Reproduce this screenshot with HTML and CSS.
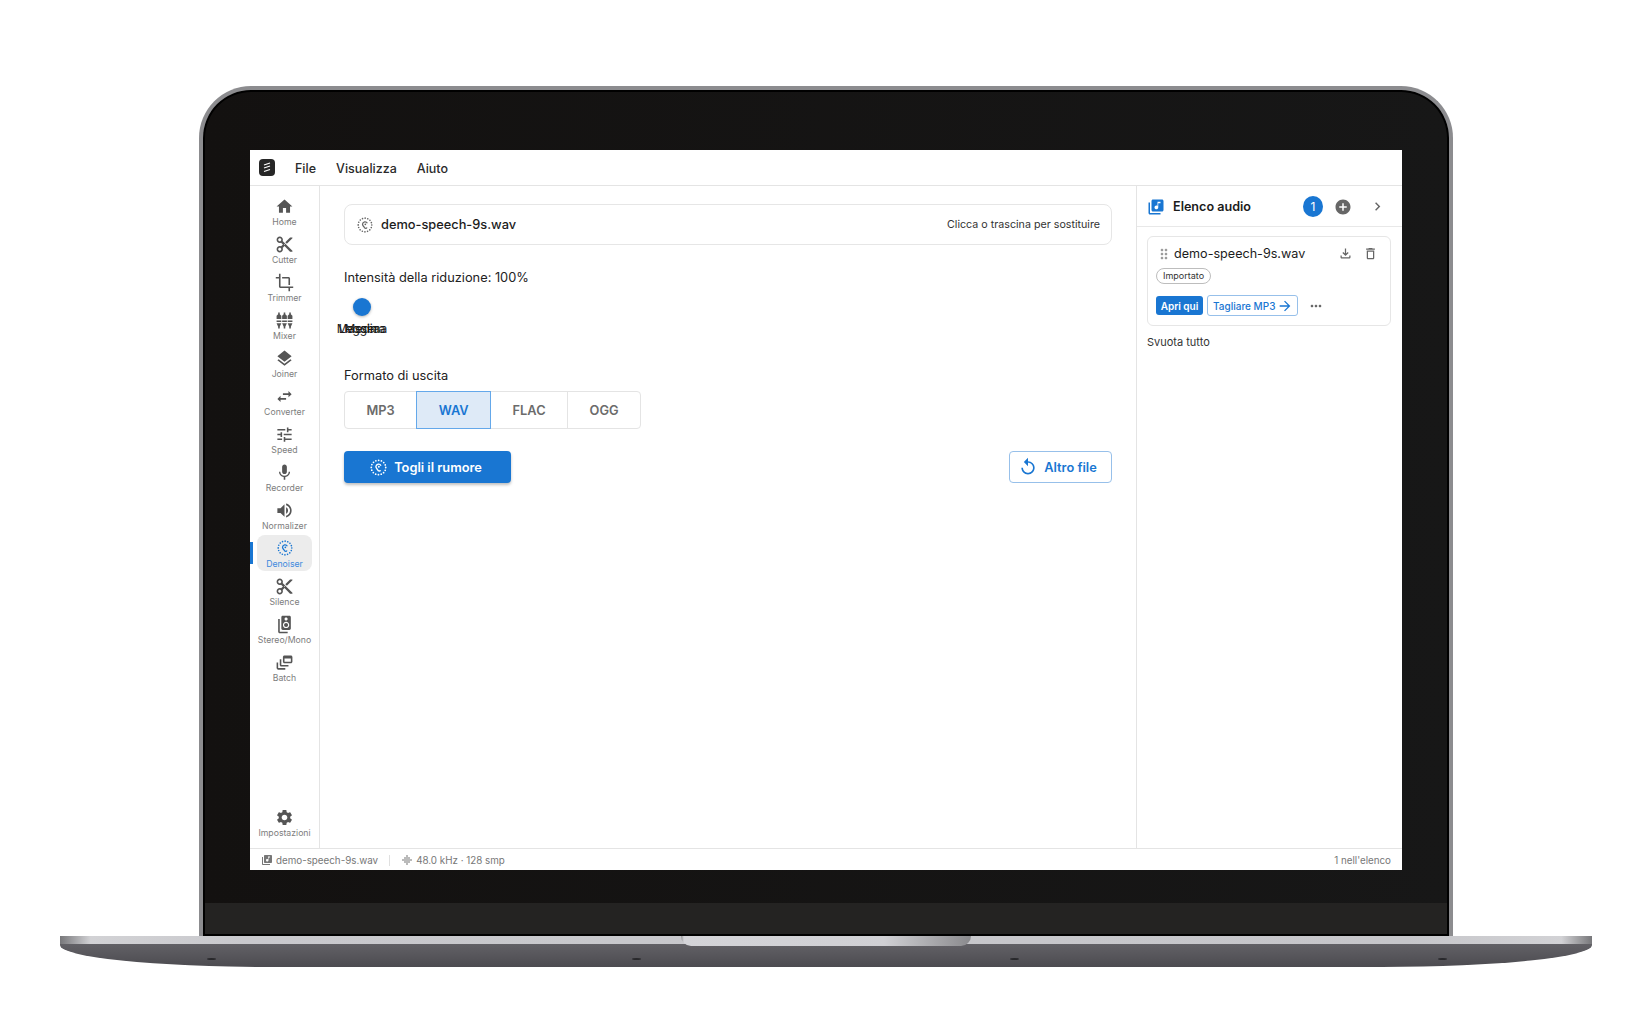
FILE: index.html
```html
<!DOCTYPE html>
<html lang="it">
<head>
    <meta charset="UTF-8" />
    <title>Denoiser</title>
    <link rel="stylesheet" href="styles.css">
</head>
<body>

    <svg class="sprite" aria-hidden="true">
        <symbol id="i-home" viewBox="0 0 24 24"><path d="M10 20v-6h4v6h5v-8h3L12 3 2 12h3v8z"/></symbol>
        <symbol id="i-cut" viewBox="0 0 24 24"><path d="M9.64 7.64c.23-.5.36-1.05.36-1.64 0-2.21-1.79-4-4-4S2 3.79 2 6s1.79 4 4 4c.59 0 1.14-.13 1.64-.36L10 12l-2.36 2.36C7.14 14.13 6.59 14 6 14c-2.21 0-4 1.79-4 4s1.79 4 4 4 4-1.79 4-4c0-.59-.13-1.14-.36-1.64L12 14l7 7h3v-1L9.64 7.64zM6 8c-1.1 0-2-.89-2-2s.9-2 2-2 2 .89 2 2-.9 2-2 2zm0 12c-1.1 0-2-.89-2-2s.9-2 2-2 2 .89 2 2-.9 2-2 2zm6-7.5c-.28 0-.5-.22-.5-.5s.22-.5.5-.5.5.22.5.5-.22.5-.5.5zM19 3l-6 6 2 2 7-7V3z"/></symbol>
        <symbol id="i-crop" viewBox="0 0 24 24"><path d="M17 15h2V7c0-1.1-.9-2-2-2H9v2h8v8zM7 17V1H5v4H1v2h4v10c0 1.1.9 2 2 2h10v4h2v-4h4v-2H7z"/></symbol>
        <symbol id="i-mixer" viewBox="0 0 24 24"><path d="M4 2h2v2l2 2v4H2V6l2-2zM11 2h2v2l2 2v4H9V6l2-2zM18 2h2v2l2 2v4h-6V6l2-2zM2 12h6v2H2zM9 12h6v2H9zM16 12h6v2h-6zM2 15.500h6L6 20v2H4v-2zM9 15.500h6L13 20v2h-2v-2zM16 15.500h6L20 20v2h-2v-2z"/></symbol>
        <symbol id="i-layers" viewBox="0 0 24 24"><path d="M11.99 18.54l-7.37-5.73L3 14.07l9 7 9-7-1.63-1.27-7.38 5.74zM12 16l7.36-5.73L21 9l-9-7-9 7 1.63 1.27L12 16z"/></symbol>
        <symbol id="i-swap" viewBox="0 0 24 24"><path d="M6.99 11L3 15l3.99 4v-3H14v-2H6.99v-3zM21 9l-3.99-4v3H10v2h7.01v3L21 9z"/></symbol>
        <symbol id="i-tune" viewBox="0 0 24 24"><path d="M3 17v2h6v-2H3zM3 5v2h10V5H3zm10 16v-2h8v-2h-8v-2h-2v6h2zM7 9v2H3v2h4v2h2V9H7zm14 4v-2H11v2h10zm-6-4h2V7h4V5h-4V3h-2v6z"/></symbol>
        <symbol id="i-mic" viewBox="0 0 24 24"><path d="M12 14c1.66 0 2.99-1.34 2.99-3L15 5c0-1.66-1.34-3-3-3S9 3.340 9 5v6c0 1.66 1.34 3 3 3zm5.300-3c0 3-2.540 5.100-5.300 5.100S6.700 14 6.700 11H5c0 3.410 2.720 6.230 6 6.720V21h2v-3.280c3.280-.48 6-3.300 6-6.720h-1.700z"/></symbol>
        <symbol id="i-volume" viewBox="0 0 24 24"><path d="M3 9v6h4l5 5V4L7 9H3zm13.500 3c0-1.770-1.020-3.290-2.500-4.030v8.050c1.480-.73 2.500-2.250 2.500-4.020zM14 3.230v2.060c2.890.86 5 3.540 5 6.710s-2.110 5.850-5 6.710v2.060c4.010-.91 7-4.490 7-8.770s-2.990-7.860-7-8.770z"/></symbol>
        <symbol id="i-denoise" viewBox="0 0 24 24">
            <circle cx="12" cy="12" r="10.200" fill="none" stroke="currentColor" stroke-width="2.500" stroke-linecap="round" stroke-dasharray="0 4"/>
            <path d="M15.500 9.500a3.800 3.800 0 0 0-7.200 1.200c0 2.500 1.800 3 2.400 4.500.4 1.200 1 1.800 2.300 1.800.9 0 1.600-.5 1.900-1.200" fill="none" stroke="currentColor" stroke-width="1.900"/>
            <circle cx="12.500" cy="11" r="1.300"/>
        </symbol>
        <symbol id="i-speaker" viewBox="0 0 24 24"><path d="M18.200 1H9.800C8.810 1 8 1.810 8 2.800v14.400c0 .99.810 1.790 1.800 1.790l8.400.01c.99 0 1.800-.81 1.800-1.800V2.800c0-.99-.81-1.800-1.800-1.800zM14 3c1.100 0 2 .89 2 2s-.9 2-2 2-2-.89-2-2 .9-2 2-2zm0 13.500c-2.210 0-4-1.790-4-4s1.790-4 4-4 4 1.790 4 4-1.790 4-4 4zm0-6.500c-1.380 0-2.500 1.120-2.500 2.500S12.620 15 14 15s2.500-1.120 2.500-2.500S15.380 10 14 10zM6 5H4v16c0 1.100.89 2 2 2h10v-2H6V5z"/></symbol>
        <symbol id="i-batch" viewBox="0 0 24 24"><path d="M8 8H6v7c0 1.100.9 2 2 2h9v-2H8V8zM20 3h-8c-1.100 0-2 .9-2 2v6c0 1.100.9 2 2 2h8c1.100 0 2-.9 2-2V5c0-1.100-.9-2-2-2zm0 8h-8V7h8v4zM4 12H2v7c0 1.100.9 2 2 2h9v-2H4v-7z"/></symbol>
        <symbol id="i-gear" viewBox="0 0 24 24"><path d="M19.140 12.940c.04-.3.060-.61.060-.94 0-.32-.02-.64-.07-.94l2.030-1.580c.18-.14.23-.41.120-.61l-1.920-3.320c-.12-.22-.37-.29-.59-.22l-2.390.96c-.5-.38-1.030-.7-1.620-.94l-.36-2.540c-.04-.24-.24-.41-.48-.41h-3.840c-.24 0-.43.17-.47.41l-.36 2.540c-.59.24-1.130.57-1.620.94l-2.390-.96c-.22-.08-.47 0-.59.22L2.740 8.870c-.12.21-.08.47.12.61l2.030 1.580c-.05.3-.09.63-.09.94s.02.64.07.94l-2.030 1.580c-.18.14-.23.41-.12.61l1.920 3.320c.12.22.37.29.59.22l2.390-.96c.5.38 1.030.7 1.620.94l.36 2.54c.05.24.24.41.48.41h3.840c.24 0 .44-.17.47-.41l.36-2.540c.59-.24 1.130-.56 1.620-.94l2.390.96c.22.08.47 0 .59-.22l1.920-3.320c.12-.22.070-.47-.12-.61l-2.010-1.580zM12 15.600c-1.980 0-3.600-1.620-3.600-3.600s1.620-3.600 3.600-3.600 3.600 1.620 3.600 3.600-1.620 3.600-3.600 3.600z"/></symbol>
        <symbol id="i-library" viewBox="0 0 24 24"><path d="M20 2H8c-1.100 0-2 .9-2 2v12c0 1.100.9 2 2 2h12c1.100 0 2-.9 2-2V4c0-1.100-.9-2-2-2zm-2 5h-3v5.500c0 1.380-1.120 2.500-2.500 2.500S10 13.880 10 12.500s1.120-2.500 2.500-2.500c.57 0 1.080.19 1.500.51V5h4v2zM4 6H2v14c0 1.100.9 2 2 2h14v-2H4V6z"/></symbol>
        <symbol id="i-add" viewBox="0 0 24 24"><path d="M12 2C6.480 2 2 6.480 2 12s4.480 10 10 10 10-4.480 10-10S17.520 2 12 2zm5 11h-4v4h-2v-4H7v-2h4V7h2v4h4v2z"/></symbol>
        <symbol id="i-chevron" viewBox="0 0 24 24"><path d="M10 6L8.590 7.410 13.170 12l-4.580 4.590L10 18l6-6z"/></symbol>
        <symbol id="i-download" viewBox="0 0 24 24"><path d="M18 15v3H6v-3H4v3c0 1.100.9 2 2 2h12c1.100 0 2-.9 2-2v-3h-2zm-1-4l-1.410-1.410L13 12.170V4h-2v8.170L8.410 9.590 7 11l5 5 5-5z"/></symbol>
        <symbol id="i-trash" viewBox="0 0 24 24"><path d="M6 19c0 1.100.9 2 2 2h8c1.100 0 2-.9 2-2V7H6v12zM8 9h8v10H8V9zm7.500-5l-1-1h-5l-1 1H5v2h14V4z"/></symbol>
        <symbol id="i-drag" viewBox="0 0 24 24"><path d="M11 18c0 1.100-.9 2-2 2s-2-.9-2-2 .9-2 2-2 2 .9 2 2zm-2-8c-1.100 0-2 .9-2 2s.9 2 2 2 2-.9 2-2-.9-2-2-2zm0-6c-1.100 0-2 .9-2 2s.9 2 2 2 2-.9 2-2-.9-2-2-2zm6 4c1.100 0 2-.9 2-2s-.9-2-2-2-2 .9-2 2 .9 2 2 2zm0 2c-1.100 0-2 .9-2 2s.9 2 2 2 2-.9 2-2-.9-2-2-2zm0 6c-1.100 0-2 .9-2 2s.9 2 2 2 2-.9 2-2-.9-2-2-2z"/></symbol>
        <symbol id="i-arrow" viewBox="0 0 24 24"><path d="M12 4l-1.410 1.410L16.170 11H4v2h12.170l-5.580 5.590L12 20l8-8z"/></symbol>
        <symbol id="i-more" viewBox="0 0 24 24"><path d="M6 10c-1.100 0-2 .9-2 2s.9 2 2 2 2-.9 2-2-.9-2-2-2zm12 0c-1.100 0-2 .9-2 2s.9 2 2 2 2-.9 2-2-.9-2-2-2zm-6 0c-1.100 0-2 .9-2 2s.9 2 2 2 2-.9 2-2-.9-2-2-2z"/></symbol>
        <symbol id="i-replay" viewBox="0 0 24 24"><path d="M12 5V1L7 6l5 5V7c3.310 0 6 2.690 6 6s-2.690 6-6 6-6-2.690-6-6H4c0 4.420 3.580 8 8 8s8-3.580 8-8-3.580-8-8-8z"/></symbol>
        <symbol id="i-wave" viewBox="0 0 24 24"><path d="M7 18h2V6H7v12zm4 4h2V2h-2v20zm-8-8h2v-4H3v4zm12 4h2V6h-2v12zm4-8v4h2v-4h-2z"/></symbol>
    </svg>

    <div class="lid">
        <div class="app">

            <header class="menubar">
                <svg class="logo" viewBox="0 0 16 17">
                    <rect width="16" height="17" rx="4" fill="#262626"/>
                    <path d="M5 6l6-2M5 9l6-2M5 12.500l6-2" stroke="#fff" stroke-width="1.300" fill="none"/>
                </svg>
                <nav class="menu">
                    <span>File</span>
                    <span>Visualizza</span>
                    <span>Aiuto</span>
                </nav>
            </header>

            <div class="workspace">

                <aside class="rail">
                    <a class="rail-item"><svg><use href="#i-home"/></svg>Home</a>
                    <a class="rail-item"><svg><use href="#i-cut"/></svg>Cutter</a>
                    <a class="rail-item"><svg><use href="#i-crop"/></svg>Trimmer</a>
                    <a class="rail-item"><svg><use href="#i-mixer"/></svg>Mixer</a>
                    <a class="rail-item"><svg><use href="#i-layers"/></svg>Joiner</a>
                    <a class="rail-item"><svg><use href="#i-swap"/></svg>Converter</a>
                    <a class="rail-item"><svg><use href="#i-tune"/></svg>Speed</a>
                    <a class="rail-item"><svg><use href="#i-mic"/></svg>Recorder</a>
                    <a class="rail-item"><svg><use href="#i-volume"/></svg>Normalizer</a>
                    <a class="rail-item active"><svg><use href="#i-denoise"/></svg>Denoiser</a>
                    <a class="rail-item"><svg><use href="#i-cut"/></svg>Silence</a>
                    <a class="rail-item"><svg><use href="#i-speaker"/></svg>Stereo/Mono</a>
                    <a class="rail-item"><svg><use href="#i-batch"/></svg>Batch</a>
                    <a class="rail-item rail-bottom"><svg><use href="#i-gear"/></svg>Impostazioni</a>
                </aside>

                <main class="main">
                    <div class="dropzone">
                        <div class="dropzone-file">
                            <svg class="icon-16"><use href="#i-denoise"/></svg>
                            <span>demo-speech-9s.wav</span>
                        </div>
                        <span class="dropzone-hint">Clicca o trascina per sostituire</span>
                    </div>

                    <p class="field-label strength-label">Intensità della riduzione: 100%</p>
                    <div class="slider">
                        <span class="slider-thumb"></span>
                        <!-- the three marks really do sit on top of each other -->
                        <span class="slider-mark">Leggera</span>
                        <span class="slider-mark">Media</span>
                        <span class="slider-mark">Massima</span>
                    </div>

                    <p class="field-label format-label">Formato di uscita</p>
                    <div class="formats">
                        <button type="button" class="format">MP3</button>
                        <button type="button" class="format selected">WAV</button>
                        <button type="button" class="format">FLAC</button>
                        <button type="button" class="format">OGG</button>
                    </div>

                    <div class="actions">
                        <button type="button" class="btn-primary"><svg class="icon-17"><use href="#i-denoise"/></svg>Togli il rumore</button>
                        <button type="button" class="btn-outline"><svg class="icon-20"><use href="#i-replay"/></svg>Altro file</button>
                    </div>
                </main>

                <aside class="panel">
                    <div class="panel-head">
                        <svg class="panel-icon"><use href="#i-library"/></svg>
                        <span class="panel-title">Elenco audio</span>
                        <span class="badge">1</span>
                        <svg class="panel-add"><use href="#i-add"/></svg>
                        <svg class="panel-chevron"><use href="#i-chevron"/></svg>
                    </div>
                    <div class="panel-body">
                        <div class="track">
                            <div class="track-row">
                                <svg class="track-drag"><use href="#i-drag"/></svg>
                                <span class="track-name">demo-speech-9s.wav</span>
                                <svg class="track-tool"><use href="#i-download"/></svg>
                                <svg class="track-tool"><use href="#i-trash"/></svg>
                            </div>
                            <span class="chip">Importato</span>
                            <div class="track-actions">
                                <button type="button" class="btn-small-fill">Apri qui</button>
                                <button type="button" class="btn-small-line">Tagliare MP3<svg class="icon-16"><use href="#i-arrow"/></svg></button>
                                <svg class="track-more"><use href="#i-more"/></svg>
                            </div>
                        </div>
                        <a class="clear-all">Svuota tutto</a>
                    </div>
                </aside>

            </div>

            <footer class="statusbar">
                <svg class="icon-12"><use href="#i-library"/></svg>
                <span>demo-speech-9s.wav</span>
                <span class="status-sep"></span>
                <svg class="icon-12"><use href="#i-wave"/></svg>
                <span>48.0 kHz · 128 smp</span>
                <span class="status-right">1 nell'elenco</span>
            </footer>

        </div>
    </div>

    <div class="base">
        <span class="notch"></span>
        <div class="base-body">
            <span class="foot"></span>
            <span class="foot"></span>
            <span class="foot"></span>
            <span class="foot"></span>
        </div>
    </div>

</body>
</html>
```

FILE: styles.css
```css
* {
    box-sizing: border-box;
}

body {
    margin: 0;
    padding-top: 86px;
    height: 1020px;
    overflow: hidden;
    background-color: #ffffff;
    font-family: Inter, "Liberation Sans", sans-serif;
    color: #1c1c1c;
}

.sprite {
    position: absolute;
    width: 0;
    height: 0;
}

svg {
    fill: currentColor;
    flex: none;
}

p {
    margin: 0;
}

button {
    font-family: inherit;
    cursor: pointer;
}

.icon-12 { width: 12px; height: 12px; }
.icon-16 { width: 16px; height: 16px; }
.icon-17 { width: 17px; height: 17px; }
.icon-20 { width: 20px; height: 20px; }

/* laptop frame */
.lid {
    width: 1254px;
    height: 850px;
    margin-left: 199px;
    padding: 60px 47px 0;
    border: 4px solid #8c8c8f;
    border-bottom: none;
    border-radius: 52px 52px 0 0;
    background:
        linear-gradient(#00000000 813px, #242322 813px),
        linear-gradient(90deg, #131110, #171717);
    box-shadow: inset 0 0 0 2px #000000;
}

.base {
    position: relative;
    width: 1532px;
    margin-left: 60px;
}

.base::before {
    content: "";
    display: block;
    height: 8px;
    background: linear-gradient(90deg, #77777a, #d2d2d5 2%, #c9c9cd 12%, #c6c6ca 88%, #d2d2d5 98%, #77777a);
}

.base-body {
    display: flex;
    height: 23px;
    padding: 14px 0 0 147px;
    border-radius: 0 0 210px 210px / 0 0 22px 22px;
    background: linear-gradient(#626166, #4c4b50);
}

.foot {
    width: 9px;
    height: 2px;
    border-radius: 50%;
    background-color: #28282b;
}

.foot:nth-child(2) { margin-left: 416px; }
.foot:nth-child(3) { margin-left: 369px; }
.foot:nth-child(4) { margin-left: 419px; }

.notch {
    position: absolute;
    top: 0;
    left: 621px;
    width: 290px;
    height: 10px;
    border-radius: 0 0 10px 10px;
    background: linear-gradient(90deg, #8e8e91, #d4d4d8 1%, #d0d0d4 70%, #8a8a8d);
}

/* app shell */
.app {
    display: flex;
    flex-direction: column;
    width: 1152px;
    height: 720px;
    background-color: #ffffff;
}

.menubar {
    display: flex;
    align-items: center;
    flex: none;
    height: 36px;
    padding-left: 9px;
    border-bottom: 1px solid #e4e4e4;
}

.logo {
    width: 16px;
    height: 17px;
}

.menu {
    display: flex;
    gap: 20px;
    margin-left: 20px;
    padding-top: 1px;
    font-size: 12.500px;
    font-weight: 500;
    color: #2a2a2a;
}

.workspace {
    display: flex;
    flex: 1;
    min-height: 0;
}

/* left rail */
.rail {
    display: flex;
    flex-direction: column;
    align-items: center;
    gap: 2px;
    flex: none;
    width: 70px;
    padding: 7px 0 8px;
    border-right: 1px solid #e4e4e4;
}

.rail-item {
    position: relative;
    display: flex;
    flex-direction: column;
    align-items: center;
    width: 55px;
    height: 36px;
    padding-top: 4px;
    border-radius: 8px;
    font-size: 8.700px;
    line-height: 12px;
    color: #7d7d7d;
    white-space: nowrap;
}

.rail-item svg {
    width: 19px;
    height: 19px;
    color: #555555;
}

.rail-item.active {
    background-color: #ececec;
    color: #3d8ade;
}

.rail-item.active svg {
    width: 16px;
    height: 16px;
    margin: 1px 0 2px;
    color: #1976d2;
}

.rail-item.active::before {
    content: "";
    position: absolute;
    top: 7px;
    left: -7px;
    width: 3px;
    height: 22px;
    background-color: #1976d2;
}

.rail-bottom {
    margin-top: auto;
}

/* main column */
.main {
    flex: 1;
    min-width: 0;
    padding: 18px 24px;
}

.dropzone {
    display: flex;
    align-items: center;
    justify-content: space-between;
    height: 41px;
    padding: 0 11px 0 12px;
    border: 1px solid #e6e6e6;
    border-radius: 8px;
}

.dropzone-file {
    display: flex;
    align-items: center;
    gap: 8px;
    font-size: 12.800px;
    font-weight: 500;
}

.dropzone-file svg {
    color: #666666;
}

.dropzone-hint {
    font-size: 10.700px;
    color: #333333;
}

.field-label {
    font-size: 12.800px;
    line-height: 16px;
    color: #222222;
}

.strength-label {
    margin-top: 25px;
}

.slider {
    display: grid;
    grid-template-columns: 36px;
    justify-items: center;
    row-gap: 6px;
    margin-top: 12px;
}

.slider-thumb {
    width: 18px;
    height: 18px;
    border-radius: 50%;
    background-color: #1976d2;
    box-shadow: 0 1px 3px rgba(0, 0, 0, 0.3);
}

.slider-mark {
    grid-row: 2;
    grid-column: 1;
    font-size: 12px;
    line-height: 14px;
    white-space: nowrap;
}

.format-label {
    margin-top: 32px;
}

.formats {
    display: inline-flex;
    height: 38px;
    margin-top: 7px;
    border: 1px solid #e4e4e4;
    border-radius: 4px;
}

.format {
    padding: 0 21.500px;
    border: none;
    border-left: 1px solid #e4e4e4;
    background: none;
    font-size: 12.800px;
    font-weight: 600;
    color: #6b6b6b;
}

.format:first-child {
    border-left: none;
}

.format.selected {
    margin: -1px 0;
    border: 1px solid #64a8ea;
    background-color: #deeaf7;
    color: #1976d2;
}

.format.selected + .format {
    border-left: none;
}

.actions {
    display: flex;
    justify-content: space-between;
    margin-top: 22px;
}

.btn-primary,
.btn-outline {
    display: flex;
    align-items: center;
    justify-content: center;
    height: 32px;
    border-radius: 4px;
    font-size: 12.800px;
    font-weight: 600;
}

.btn-primary {
    gap: 7px;
    width: 167px;
    padding: 0 3px 0 0;
    border: none;
    background-color: #1976d2;
    color: #ffffff;
    box-shadow: 0 2px 3px rgba(0, 0, 0, 0.25);
}

.btn-outline {
    gap: 6px;
    width: 103px;
    padding: 0 6px 0 0;
    border: 1px solid #97c0ea;
    background-color: #ffffff;
    color: #1976d2;
}

/* right panel */
.panel {
    display: flex;
    flex-direction: column;
    flex: none;
    width: 266px;
    border-left: 1px solid #e4e4e4;
}

.panel-head {
    display: flex;
    align-items: center;
    flex: none;
    height: 41px;
    padding: 1px 16px 0 10px;
    border-bottom: 1px solid #e8e8e8;
}

.panel-icon {
    width: 18px;
    height: 18px;
    color: #1976d2;
}

.panel-title {
    flex: 1;
    margin-left: 8px;
    font-size: 12.600px;
    font-weight: 600;
}

.badge {
    width: 20px;
    height: 21px;
    border-radius: 50%;
    background-color: #1976d2;
    color: #ffffff;
    font-size: 12px;
    line-height: 21px;
    text-align: center;
}

.panel-add {
    width: 18px;
    height: 18px;
    margin-left: 11px;
    color: #666666;
}

.panel-chevron {
    width: 17px;
    height: 17px;
    margin-left: 17px;
    color: #666666;
}

.panel-body {
    padding: 9px 11px 9px 10px;
}

.track {
    display: flex;
    flex-direction: column;
    align-items: flex-start;
    height: 90px;
    padding: 8px 8px 0;
    border: 1px solid #e6e6e6;
    border-radius: 6px;
}

.track-row {
    display: flex;
    align-items: center;
    align-self: stretch;
    height: 17px;
}

.track-drag {
    width: 16px;
    height: 16px;
    color: #9a9a9a;
}

.track-name {
    flex: 1;
    margin-left: 2px;
    font-size: 12.600px;
}

.track-tool {
    width: 15px;
    height: 15px;
    margin-left: 10px;
    color: #666666;
}

.track-tool:last-child {
    margin-right: 4px;
}

.chip {
    height: 16px;
    margin-top: 6px;
    padding: 0 6px;
    border: 1px solid #bdbdbd;
    border-radius: 8px;
    font-size: 9px;
    line-height: 14px;
    color: #333333;
}

.track-actions {
    display: flex;
    align-items: center;
    margin-top: 11px;
}

.btn-small-fill {
    width: 47px;
    height: 19px;
    padding: 0;
    border: none;
    border-radius: 3px;
    background-color: #1976d2;
    color: #ffffff;
    font-size: 10px;
    font-weight: 600;
}

.btn-small-line {
    display: flex;
    align-items: center;
    gap: 2px;
    width: 91px;
    height: 21px;
    margin-left: 4px;
    padding: 0 0 0 5px;
    border: 1px solid #97c0ea;
    border-radius: 3px;
    background-color: #ffffff;
    color: #1976d2;
    font-size: 10px;
    font-weight: 500;
}

.track-more {
    width: 16px;
    height: 16px;
    margin-left: 10px;
    color: #666666;
}

.clear-all {
    display: block;
    margin-top: 9px;
    font-size: 11px;
    line-height: 14px;
    color: #333333;
}

/* status bar */
.statusbar {
    display: flex;
    align-items: center;
    flex: none;
    height: 22px;
    padding: 1px 11px 0;
    border-top: 1px solid #e4e4e4;
    font-size: 9.800px;
    color: #777777;
}

.statusbar span {
    margin-left: 3px;
}

.status-sep {
    width: 1px;
    height: 11px;
    margin: 0 11px !important;
    background-color: #e0e0e0;
}

.status-right {
    margin-left: auto !important;
}
```
